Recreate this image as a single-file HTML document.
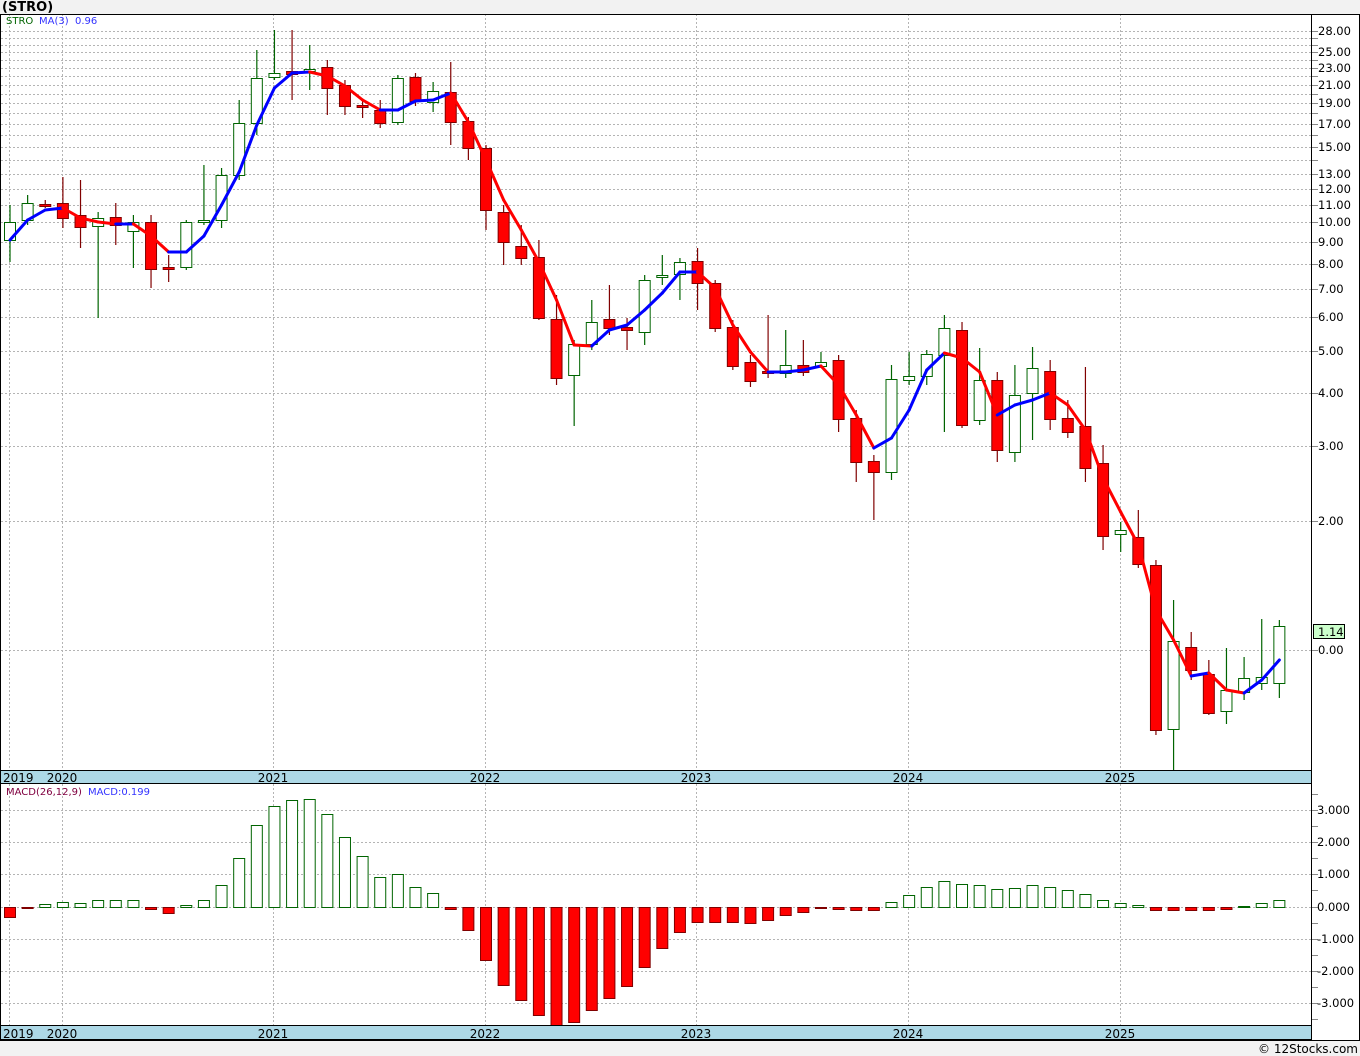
<!DOCTYPE html>
<html><head><meta charset="utf-8"><style>
html,body{margin:0;padding:0;background:#f2f2f2;}
svg{display:block;font-family:"DejaVu Sans","Liberation Sans",sans-serif;}
</style></head><body>
<svg id="c" width="1360" height="1056" xmlns="http://www.w3.org/2000/svg"></svg>
<script>
const C=[[222,240,205,262,1],[220,203,195,225,1],[204,205,200,208,0],[203,218,177,228,0],[215,227,180,248,0],[226,218,212,318,1],[217,225,203,245,0],[231,222,215,268,1],[222,269,215,288,0],[267,269,255,282,0],[267,222,220,270,1],[222,220,165,225,1],[220,175,168,228,1],[175,123,100,180,1],[123,78,50,135,1],[77,73,30,80,1],[71,74,30,100,0],[71,69,45,90,1],[67,88,60,115,0],[85,106,80,115,0],[105,107,100,118,0],[110,123,100,128,0],[122,78,75,125,1],[77,101,73,106,0],[102,91,82,112,1],[92,122,62,145,0],[121,148,117,160,0],[148,210,145,230,0],[212,242,205,265,0],[246,258,225,265,0],[257,318,240,320,0],[319,378,295,385,0],[375,344,340,426,1],[344,322,300,350,1],[319,328,285,335,0],[327,330,318,350,0],[332,280,275,345,1],[277,275,255,285,1],[274,262,258,300,1],[261,283,248,310,0],[283,328,280,332,0],[327,366,320,370,0],[362,381,355,387,0],[371,373,315,378,0],[373,365,330,378,1],[365,372,340,376,0],[366,362,352,368,1],[360,419,355,432,0],[418,462,410,482,0],[461,472,455,520,0],[472,379,365,480,1],[380,376,352,385,1],[376,354,350,385,1],[355,328,315,432,1],[330,425,322,428,0],[420,380,348,425,1],[380,450,372,462,0],[452,395,365,462,1],[393,368,347,440,1],[371,419,360,430,0],[418,432,400,438,0],[426,468,367,482,0],[463,536,445,550,0],[534,530,522,552,1],[537,564,510,568,0],[565,730,560,735,0],[729,641,600,770,1],[647,670,632,680,0],[674,713,660,715,0],[711,690,648,724,1],[692,678,657,700,1],[683,677,619,690,1],[683,626,620,698,1]];
const MA=[240,220,210,208,218,222,224,224,236,252,252,236,205,172,125,88,73,72,76,86,100,110,110,101,100,93,122,160,200,230,262,300,345,346,330,325,310,293,272,272,288,325,352,372,372,370,366,385,415,448,438,410,370,353,358,372,415,405,400,393,405,430,478,512,545,610,640,676,673,690,693,680,660];
const M=[917,908,904,902,903,900,900,900,909,913,905,900,885,858,825,806,800,799,814,837,856,877,874,887,893,909,930,960,985,1000,1015,1025,1022,1010,998,986,967,948,932,922,922,922,923,920,915,912,908,909,910,910,902,895,887,881,884,885,889,888,885,887,890,894,900,903,905,910,910,910,910,909,906,903,900];
let s='';
const X=i=>10+i*17.63;
s+='<rect x="1" y="14" width="1310" height="756" fill="#fff"/>';
s+='<rect x="1311" y="14" width="49" height="1026" fill="#fff"/>';
s+='<rect x="1" y="784" width="1310" height="241" fill="#fff"/>';
const yp=p=>650-185.7*Math.log(p);
const dot='stroke="#b4b4b4" stroke-dasharray="2,2" stroke-width="1"';
for(let p=2;p<=28;p++){const y=Math.round(yp(p))+.5;s+=`<line x1="1" x2="1311" y1="${y}" y2="${y}" ${dot}/><line x1="1311" x2="1318" y1="${y}" y2="${y}" stroke="#888"/>`;}
s+=`<line x1="1" x2="1311" y1="650.5" y2="650.5" ${dot}/><line x1="1311" x2="1318" y1="650.5" y2="650.5" stroke="#888"/>`;
[28,25,23,21,19,17,15,13,12,11,10,9,8,7,6,5,4,3,2].forEach(p=>{s+=`<text x="1318" y="${Math.round(yp(p))+4}" font-size="11.5" fill="#000">${p.toFixed(2)}</text>`;});
s+=`<text x="1318" y="654" font-size="11.5">0.00</text>`;
s+=`<rect x="1313.5" y="624.5" width="31" height="14" fill="#ccffcc" stroke="#000"/><text x="1318" y="636" font-size="11.5">1.14</text>`;
const yrs=[[62,'2020'],[273,'2021'],[485,'2022'],[696,'2023'],[908,'2024'],[1120,'2025']];
[9].concat(yrs.map(a=>a[0])).forEach(x=>{s+=`<line x1="${x+.5}" x2="${x+.5}" y1="14" y2="770" ${dot}/><line x1="${x+.5}" x2="${x+.5}" y1="784" y2="1025" ${dot}/>`;});
[810,842,874,907,939,971,1003].forEach((y,k)=>{s+=`<line x1="1" x2="1311" y1="${y+.5}" y2="${y+.5}" ${dot}/><line x1="1311" x2="1318" y1="${y+.5}" y2="${y+.5}" stroke="#888"/><text x="1317" y="${y+4}" font-size="11.5">${(3-k)>=0?' ':''}${(3-k).toFixed(3)}</text>`;});
[794,826,858,890,923,955,987,1019].forEach(y=>{s+=`<line x1="1311" x2="1318" y1="${y+.5}" y2="${y+.5}" stroke="#888"/>`;});
M.forEach((v,i)=>{const x=X(i)-5.5;if(v<907){s+=`<rect x="${x}" y="${v+.5}" width="11" height="${907-v}" fill="#fff" stroke="#006400"/>`}else{s+=`<rect x="${x}" y="907.5" width="11" height="${Math.max(v-907,1)}" fill="#ff0000" stroke="#800000"/>`}});
C.forEach((c,i)=>{const x=X(i);const [o,cl,h,l,g]=c;const col=g?'#006400':'#800000';const t=Math.min(o,cl),b=Math.max(o,cl);
s+=`<line x1="${x}" x2="${x}" y1="${h}" y2="${l}" stroke="${col}" stroke-width="1.2"/>`;
s+=`<rect x="${x-5.5}" y="${t+.5}" width="11" height="${Math.max(b-t,2)}" fill="${g?'#fff':'#ff0000'}" stroke="${col}"/>`;});
for(let i=0;i<MA.length-1;i++){const col=MA[i+1]<=MA[i]?'#0000ff':'#ff0000';s+=`<line x1="${X(i)}" y1="${MA[i]}" x2="${X(i+1)}" y2="${MA[i+1]}" stroke="${col}" stroke-width="3" stroke-linecap="round"/>`;}
[[770,784],[1025,1040]].forEach(([a,b])=>{s+=`<rect x="1" y="${a}" width="1310" height="${b-a}" fill="#add8e6"/><line x1="0" x2="1311" y1="${a+.5}" y2="${a+.5}" stroke="#000"/><line x1="0" x2="1311" y1="${b-.5}" y2="${b-.5}" stroke="#000"/>`;
s+=`<text x="3" y="${b-2}" font-size="12">2019</text>`;yrs.forEach(([x,t])=>s+=`<text x="${x}" y="${b-2}" font-size="12" text-anchor="middle">${t}</text>`);});
s+='<line x1="0" x2="1360" y1="14.5" y2="14.5" stroke="#000"/><line x1="1311.5" x2="1311.5" y1="14" y2="1040" stroke="#000"/><line x1="0.5" x2="0.5" y1="14" y2="1040" stroke="#000"/><line x1="0" x2="1360" y1="1040.5" y2="1040.5" stroke="#000"/><line x1="1359.5" x2="1359.5" y1="14" y2="1040" stroke="#000"/>';
s+='<text x="2" y="11" font-size="13" font-weight="bold">(STRO)</text>';
s+='<text x="6" y="24" font-size="10" fill="#006400">STRO</text><text x="39" y="24" font-size="10" fill="#3333ff">MA(3)</text><text x="75" y="24" font-size="10" fill="#3333ff">0.96</text>';
s+='<text x="6" y="795" font-size="10" fill="#800040">MACD(26,12,9)</text><text x="88" y="795" font-size="10" fill="#3333ff">MACD:0.199</text>';
s+='<text x="1358" y="1053" font-size="12" text-anchor="end">© 12Stocks.com</text>';
document.getElementById('c').innerHTML=s;
</script>
</body></html>
